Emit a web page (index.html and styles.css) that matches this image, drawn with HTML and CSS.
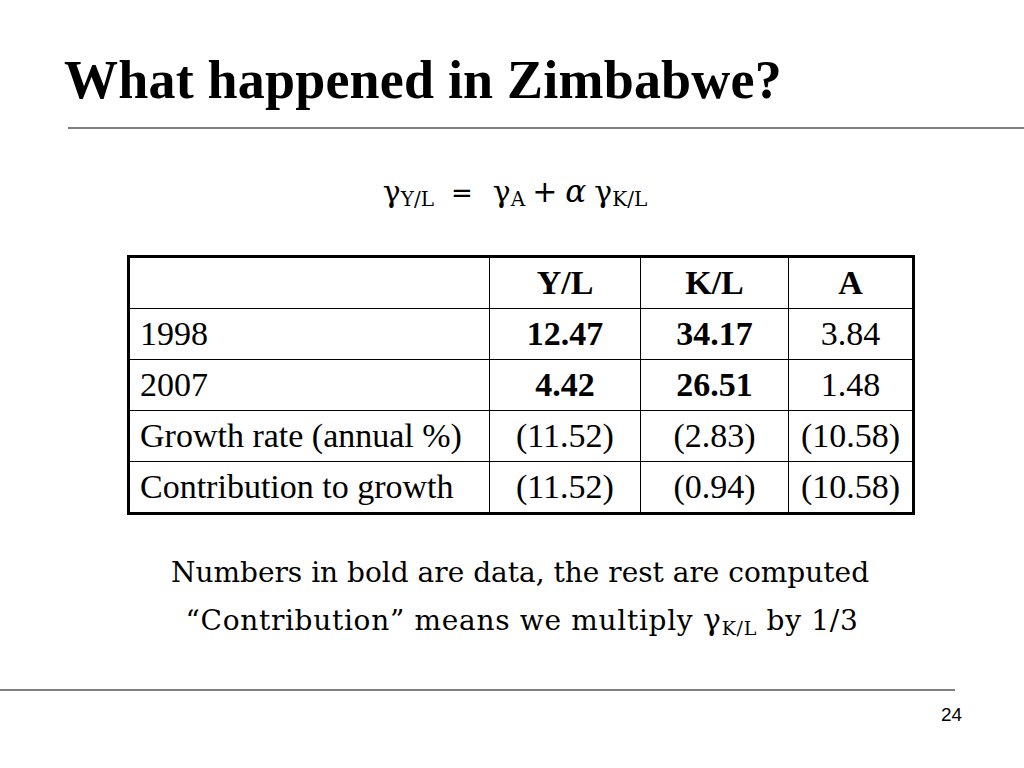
FILE: index.html
```html
<!DOCTYPE html>
<html>
<head>
<meta charset="utf-8">
<link rel="stylesheet" href="styles.css">
</head>
<body>
<div class="slide">
  <h1 class="title">What happened in Zimbabwe?</h1>
  <div class="rule-top"></div>
  <div class="equation">
    <span class="g">γ</span><sub>Y/L</sub><span class="eq">=</span><span class="g">γ</span><sub>A</sub><span class="plus">+</span><span class="alpha">α</span><span class="g">γ</span><sub>K/L</sub>
  </div>
  <table class="data">
    <tr><th></th><th>Y/L</th><th>K/L</th><th>A</th></tr>
    <tr><td class="lab">1998</td><td><b>12.47</b></td><td><b>34.17</b></td><td>3.84</td></tr>
    <tr><td class="lab">2007</td><td><b>4.42</b></td><td><b>26.51</b></td><td>1.48</td></tr>
    <tr><td class="lab">Growth rate (annual %)</td><td>(11.52)</td><td>(2.83)</td><td>(10.58)</td></tr>
    <tr><td class="lab">Contribution to growth</td><td>(11.52)</td><td>(0.94)</td><td>(10.58)</td></tr>
  </table>
  <div class="notes">
    <p>Numbers in bold are data, the rest are computed</p>
    <p class="wide">“Contribution” means we multiply <span class="g">γ</span><sub>K/L</sub> by 1/3</p>
  </div>
  <div class="rule-bottom"></div>
  <div class="pagenum">24</div>
</div>
</body>
</html>
```
FILE: styles.css
```css
html, body { margin: 0; padding: 0; background: #fff; }
.slide { width: 1024px; height: 768px; position: relative; overflow: hidden; color: #000; }
.title {
  margin: 0; padding: 49px 0 0 64px;
  font-family: "Liberation Serif", serif; font-weight: bold; font-size: 54px; line-height: 62px;
  letter-spacing: 0.2px;
}
.rule-top { margin: 16px 0 0 68px; height: 2px; background: #808080; }
.equation {
  margin-top: 42px; text-align: center; font-family: "DejaVu Serif", serif; font-size: 30px; line-height: 40px;
  padding-left: 6px;
}
.equation .g { font-weight: normal; }
.equation sub { font-family: "DejaVu Serif", serif; font-size: 20px; vertical-align: -4px; line-height: 0; }
.equation .eq { margin: 0 20px 0 17px; font-size: 26px; font-family: "DejaVu Sans", sans-serif; }
.equation .plus { margin: 0 8px 0 7px; font-size: 30px; font-family: "DejaVu Sans", sans-serif; }
.equation .alpha { font-style: italic; font-family: "DejaVu Serif", serif; font-size: 31px; margin-right: 8px; }
.data {
  border-collapse: collapse; margin: 42px 0 0 127px; width: 788px;
  font-family: "Liberation Serif", serif; font-size: 34px;
  border: 3px solid #000;
}
.data th, .data td { border: 1px solid #000; height: 50px; padding: 0 10px; text-align: center; }
.data th { font-weight: bold; }
.data th:nth-child(1) { width: 339px; }
.data th:nth-child(2) { width: 130px; }
.data th:nth-child(3) { width: 127px; }
.data td.lab { text-align: left; }
.notes { margin-top: 34px; text-align: center; font-family: "DejaVu Serif", serif; font-size: 28px; padding-left: 16px; }
.notes p { margin: 0; line-height: 47px; }
.notes p.wide { letter-spacing: 0.7px; padding-left: 4px; }
.notes .g { font-size: 30px; }
.notes sub { font-size: 19px; vertical-align: -5px; line-height: 0; }
.rule-bottom { position: absolute; left: 0; top: 689px; width: 955px; height: 2px; background: #808080; }
.pagenum { position: absolute; left: 941px; top: 704px; font-family: "Liberation Sans", sans-serif; font-size: 19px; }
```
